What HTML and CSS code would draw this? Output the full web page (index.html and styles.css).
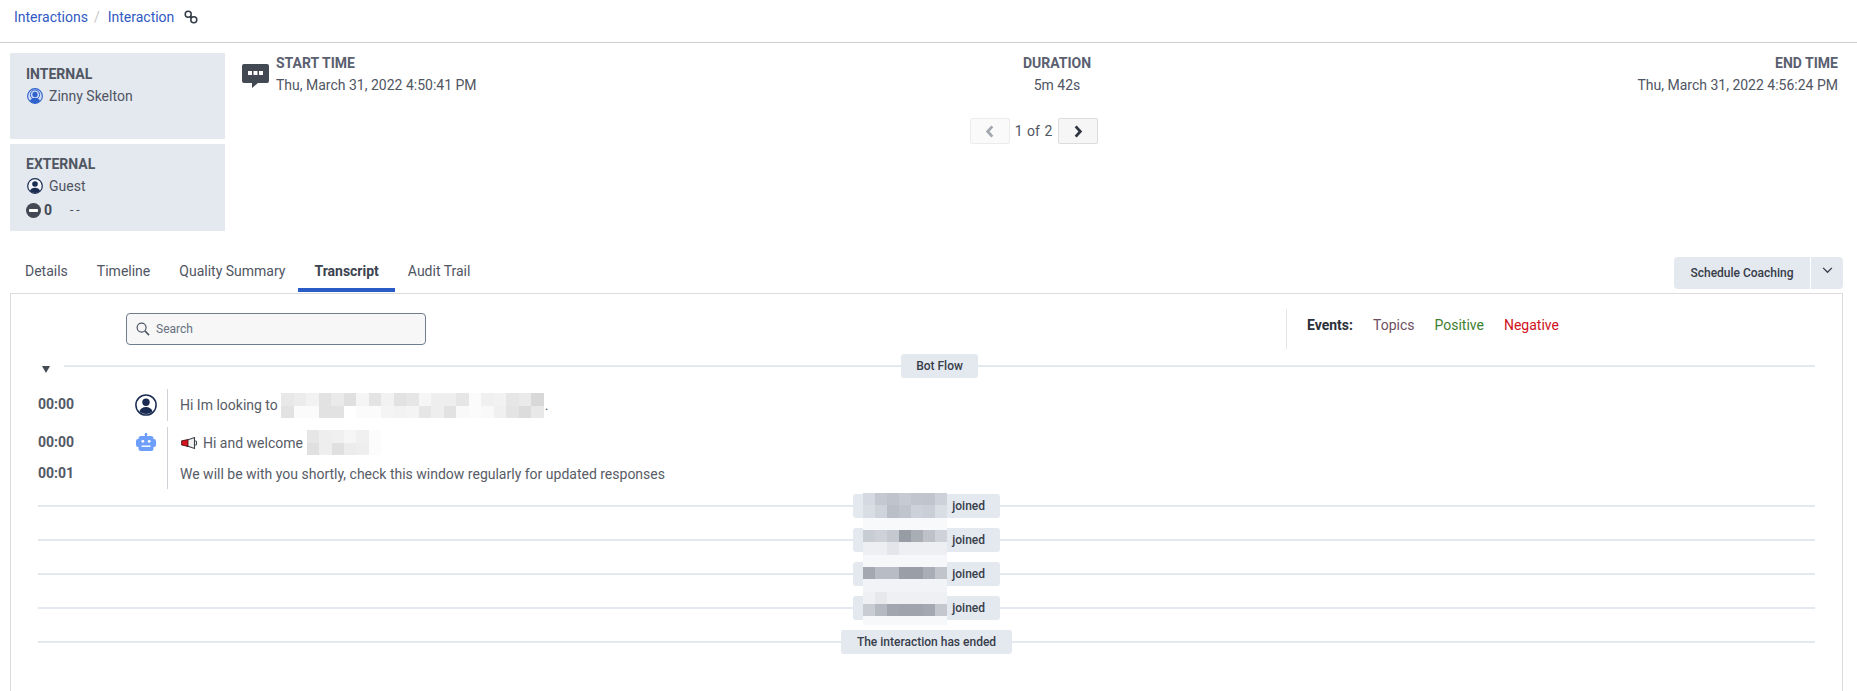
FILE: index.html
```html
<!DOCTYPE html>
<html lang="en">
<head>
<meta charset="utf-8">
<title>Interaction</title>
<link rel="stylesheet" href="styles.css">
</head>
<body>
<header class="crumbs">
  <a class="crumb">Interactions</a><span class="crumb-sep">/</span><a class="crumb">Interaction</a>
  <svg class="link-icon" viewBox="0 0 14 14" fill="none" stroke="#333a45" stroke-width="1.5"><circle cx="4.200" cy="4.200" r="3"/><circle cx="9.800" cy="9.800" r="3"/><path d="M6 6l2 2" stroke-width="1.800"/></svg>
</header>

<section class="summary">
  <div class="parties">
    <div class="party party-internal">
      <div class="party-title">INTERNAL</div>
      <div class="party-line">
        <svg class="party-icon" viewBox="0 0 16 16"><circle cx="8" cy="8" r="7.400" fill="#cfdcf5" stroke="#2f62cc" stroke-width="1.100"/><circle cx="8" cy="6.600" r="4.600" fill="none" stroke="#2f62cc" stroke-width="1"/><circle cx="8" cy="6.400" r="2.600" fill="#2f62cc"/><path d="M3 13.200c.8-2.400 2.700-3.400 5-3.400s4.200 1 5 3.400a7.400 7.400 0 0 1-10 0z" fill="#2f62cc"/></svg>
        <span>Zinny Skelton</span>
      </div>
    </div>
    <div class="party party-external">
      <div class="party-title">EXTERNAL</div>
      <div class="party-line">
        <svg class="party-icon" viewBox="0 0 16 16"><circle cx="8" cy="8" r="7.300" fill="#f4f6fa" stroke="#1a2c52" stroke-width="1.200"/><circle cx="8" cy="6" r="2.800" fill="#1a2c52"/><path d="M3 13c.6-2.300 2.600-3.300 5-3.300s4.400 1 5 3.300a7 7 0 0 1-10 0z" fill="#1a2c52"/></svg>
        <span>Guest</span>
      </div>
      <div class="party-score">
        <svg class="score-icon" viewBox="0 0 15 15"><circle cx="7.500" cy="7.500" r="7.500" fill="#424955"/><rect x="3" y="6" width="9" height="3" rx="0.800" fill="#fff"/></svg>
        <b>0</b><span class="score-dash">- -</span>
      </div>
    </div>
  </div>

  <div class="meta">
    <div class="meta-row">
      <div class="meta-start">
        <svg class="chat-icon" viewBox="0 0 27 24"><path d="M2 0h23a2 2 0 0 1 2 2v15a2 2 0 0 1-2 2H16l-6 5v-5H2a2 2 0 0 1-2-2V2a2 2 0 0 1 2-2z" fill="#434953"/><rect x="6" y="7" width="4" height="4" fill="#fff"/><rect x="11.500" y="7" width="4" height="4" fill="#fff"/><rect x="17" y="7" width="4" height="4" fill="#fff"/></svg>
        <div>
          <div class="meta-label">START TIME</div>
          <div class="meta-value">Thu, March 31, 2022 4:50:41 PM</div>
        </div>
      </div>
      <div class="meta-center">
        <div class="meta-label">DURATION</div>
        <div class="meta-value">5m 42s</div>
      </div>
      <div class="meta-end">
        <div class="meta-label">END TIME</div>
        <div class="meta-value">Thu, March 31, 2022 4:56:24 PM</div>
      </div>
    </div>
    <div class="pager">
      <button class="pager-btn pager-prev"><svg viewBox="0 0 10 14" width="10" height="13" fill="none" stroke="#a3a8b0" stroke-width="3"><path d="M7.500 1.500 2.500 7l5 5.500"/></svg></button>
      <span class="pager-text">1 of 2</span>
      <button class="pager-btn pager-next"><svg viewBox="0 0 10 14" width="10" height="13" fill="none" stroke="#2f3540" stroke-width="3"><path d="M2.500 1.500 7.500 7l-5 5.500"/></svg></button>
    </div>
  </div>
</section>

<nav class="tabbar">
  <div class="tabs">
    <a class="tab">Details</a>
    <a class="tab">Timeline</a>
    <a class="tab">Quality Summary</a>
    <a class="tab tab-active">Transcript</a>
    <a class="tab">Audit Trail</a>
  </div>
  <div class="coach">
    <button class="coach-main">Schedule Coaching</button>
    <button class="coach-more"><svg viewBox="0 0 12 8" width="11" height="7" fill="none" stroke="#39404c" stroke-width="1.500"><path d="M1 1l5 5 5-5"/></svg></button>
  </div>
</nav>

<main class="panel">
  <div class="toolbar">
    <label class="search">
      <svg class="search-icon" viewBox="0 0 15 15" fill="none" stroke="#4d5664" stroke-width="1.300"><circle cx="6" cy="6" r="4.800"/><path d="M9.500 9.500 14 14" stroke-width="1.700"/></svg>
      <span>Search</span>
    </label>
    <div class="events">
      <b class="events-title">Events:</b>
      <span class="ev-topics">Topics</span>
      <span class="ev-positive">Positive</span>
      <span class="ev-negative">Negative</span>
    </div>
  </div>

  <div class="flow-row">
    <span class="caret"></span>
    <span class="rule"></span>
    <span class="pill">Bot Flow</span>
    <span class="rule"></span>
  </div>

  <div class="turn turn-first">
    <div class="turn-times"><div class="line-time">00:00</div></div>
    <div class="turn-avatar">
      <svg class="avatar-user" viewBox="0 0 22 22"><circle cx="11" cy="11" r="10.100" fill="#fff" stroke="#1a2c52" stroke-width="1.500"/><circle cx="11" cy="8.300" r="3.700" fill="#1a2c52"/><path d="M4.500 17.500c.6-3 3.400-4.500 6.500-4.500s5.900 1.500 6.500 4.500a9.500 9.500 0 0 1-13 0z" fill="#1a2c52"/></svg>
    </div>
    <div class="turn-body">
      <div class="line-text">
        <span>Hi Im looking to</span>
        <svg class="mosaic-a" viewBox="0 0 21 2" preserveAspectRatio="none" shape-rendering="crispEdges"><rect x="0" y="0" width="1" height="1" fill="#e8e8e8"/><rect x="1" y="0" width="1" height="1" fill="#ececec"/><rect x="2" y="0" width="1" height="1" fill="#f2f2f2"/><rect x="3" y="0" width="1" height="1" fill="#e2e2e2"/><rect x="4" y="0" width="1" height="1" fill="#eaeaea"/><rect x="5" y="0" width="1" height="1" fill="#e0e0e0"/><rect x="6" y="0" width="1" height="1" fill="#f5f5f5"/><rect x="7" y="0" width="1" height="1" fill="#e4e4e4"/><rect x="8" y="0" width="1" height="1" fill="#f2f2f2"/><rect x="9" y="0" width="1" height="1" fill="#e2e2e2"/><rect x="10" y="0" width="1" height="1" fill="#e6e6e6"/><rect x="11" y="0" width="1" height="1" fill="#f6f6f6"/><rect x="12" y="0" width="1" height="1" fill="#eeeeee"/><rect x="13" y="0" width="1" height="1" fill="#eeeeee"/><rect x="14" y="0" width="1" height="1" fill="#e6e6e6"/><rect x="15" y="0" width="1" height="1" fill="#fbfbfb"/><rect x="16" y="0" width="1" height="1" fill="#f0f0f0"/><rect x="17" y="0" width="1" height="1" fill="#f2f2f2"/><rect x="18" y="0" width="1" height="1" fill="#e6e6e6"/><rect x="19" y="0" width="1" height="1" fill="#eaeaea"/><rect x="20" y="0" width="1" height="1" fill="#d8d8d8"/><rect x="0" y="1" width="1" height="1" fill="#e2e2e2"/><rect x="1" y="1" width="1" height="1" fill="#fbfbfb"/><rect x="2" y="1" width="1" height="1" fill="#fbfbfb"/><rect x="3" y="1" width="1" height="1" fill="#e2e2e2"/><rect x="4" y="1" width="1" height="1" fill="#e2e2e2"/><rect x="5" y="1" width="1" height="1" fill="#ffffff"/><rect x="6" y="1" width="1" height="1" fill="#fbfbfb"/><rect x="7" y="1" width="1" height="1" fill="#fbfbfb"/><rect x="8" y="1" width="1" height="1" fill="#f4f4f4"/><rect x="9" y="1" width="1" height="1" fill="#f2f2f2"/><rect x="10" y="1" width="1" height="1" fill="#f4f4f4"/><rect x="11" y="1" width="1" height="1" fill="#e6e6e6"/><rect x="12" y="1" width="1" height="1" fill="#eeeeee"/><rect x="13" y="1" width="1" height="1" fill="#e2e2e2"/><rect x="14" y="1" width="1" height="1" fill="#f9f9f9"/><rect x="15" y="1" width="1" height="1" fill="#fbfbfb"/><rect x="16" y="1" width="1" height="1" fill="#f9f9f9"/><rect x="17" y="1" width="1" height="1" fill="#f0f0f0"/><rect x="18" y="1" width="1" height="1" fill="#e4e4e4"/><rect x="19" y="1" width="1" height="1" fill="#dcdcdc"/><rect x="20" y="1" width="1" height="1" fill="#e8e8e8"/></svg>
        <span class="tail-dot">.</span>
      </div>
    </div>
  </div>

  <div class="turn turn-second">
    <div class="turn-times"><div class="line-time">00:00</div><div class="line-time">00:01</div></div>
    <div class="turn-avatar turn-avatar-top">
      <svg class="avatar-bot" viewBox="0 0 20 19"><rect x="9" y="0" width="2" height="3" fill="#6e9efb"/><circle cx="10" cy="1.300" r="1.300" fill="#6e9efb"/><path d="M5 3h10a2.500 2.500 0 0 1 2.500 2.500V6H18a2 2 0 0 1 2 2v4a2 2 0 0 1-2 2h-.5v1.500A2.500 2.500 0 0 1 15 18H5a2.500 2.500 0 0 1-2.500-2.500V14H2a2 2 0 0 1-2-2V8a2 2 0 0 1 2-2h.5v-.5A2.500 2.500 0 0 1 5 3z" fill="#6e9efb"/><circle cx="6.800" cy="8.300" r="1.400" fill="#fff"/><circle cx="13.200" cy="8.300" r="1.400" fill="#fff"/><rect x="5.500" y="12.500" width="9" height="1.400" fill="#fff"/></svg>
    </div>
    <div class="turn-body">
      <div class="line-text">
        <svg class="megaphone" viewBox="0 0 17 12"><path d="M5 3.500 13.500 .6v10.800L5 8.500z" fill="#f2f2f2" stroke="#3a3f48" stroke-width="1.100"/><path d="M.6 3.800 7 2.600v6.800l-6.400-1.400z" fill="#d8141e" stroke="#3a1014" stroke-width=".8"/><path d="M14.200 3.800c1.900.3 1.900 4.100 0 4.400" fill="none" stroke="#3a3f48" stroke-width="1.100"/></svg>
        <span>Hi and welcome</span>
        <svg class="mosaic-b" viewBox="0 0 6 2" preserveAspectRatio="none" shape-rendering="crispEdges"><rect x="0" y="0" width="1" height="1" fill="#e6e6e6"/><rect x="1" y="0" width="1" height="1" fill="#eeeeee"/><rect x="2" y="0" width="1" height="1" fill="#f0f0f0"/><rect x="3" y="0" width="1" height="1" fill="#f6f6f6"/><rect x="4" y="0" width="1" height="1" fill="#f0f0f0"/><rect x="5" y="0" width="1" height="1" fill="#fcfcfc"/><rect x="0" y="1" width="1" height="1" fill="#e0e0e0"/><rect x="1" y="1" width="1" height="1" fill="#eeeeee"/><rect x="2" y="1" width="1" height="1" fill="#e0e0e0"/><rect x="3" y="1" width="1" height="1" fill="#ececec"/><rect x="4" y="1" width="1" height="1" fill="#eeeeee"/><rect x="5" y="1" width="1" height="1" fill="#fcfcfc"/></svg>
      </div>
      <div class="line-text">We will be with you shortly, check this window regularly for updated responses</div>
    </div>
  </div>

  <div class="system-list">
    <div class="system-row"><span class="rule"></span><span class="pill pill-joined">joined</span><span class="rule"></span></div>
    <div class="system-row"><span class="rule"></span><span class="pill pill-joined">joined</span><span class="rule"></span></div>
    <div class="system-row"><span class="rule"></span><span class="pill pill-joined">joined</span><span class="rule"></span></div>
    <div class="system-row"><span class="rule"></span><span class="pill pill-joined">joined</span><span class="rule"></span></div>
    <div class="system-row"><span class="rule"></span><span class="pill pill-ended">The interaction has ended</span><span class="rule"></span></div>
    <svg class="mosaic-names" viewBox="0 0 7 10.700" preserveAspectRatio="none" shape-rendering="crispEdges">
      <rect x="0" y="0" width="1" height="1" fill="#d5dae2"/><rect x="1" y="0" width="1" height="1" fill="#c3c8d1"/><rect x="2" y="0" width="1" height="1" fill="#bfc3cc"/><rect x="3" y="0" width="1" height="1" fill="#c6cad3"/><rect x="4" y="0" width="1" height="1" fill="#c0c5ce"/><rect x="5" y="0" width="1" height="1" fill="#bfc4cd"/><rect x="6" y="0" width="1" height="1" fill="#cdd2da"/>
      <rect x="0" y="1" width="1" height="1" fill="#d9dee5"/><rect x="1" y="1" width="1" height="1" fill="#cfd3dc"/><rect x="2" y="1" width="1" height="1" fill="#babec7"/><rect x="3" y="1" width="1" height="1" fill="#bfc4cd"/><rect x="4" y="1" width="1" height="1" fill="#cdd2da"/><rect x="5" y="1" width="1" height="1" fill="#c9ced7"/><rect x="6" y="1" width="1" height="1" fill="#d9dee5"/>
      <rect x="0" y="2" width="7" height="1" fill="#f8f9fb"/>
      <rect x="0" y="3" width="1" height="1" fill="#c8ccd3"/><rect x="1" y="3" width="1" height="1" fill="#ced1d7"/><rect x="2" y="3" width="1" height="1" fill="#c5c8ce"/><rect x="3" y="3" width="1" height="1" fill="#989ca4"/><rect x="4" y="3" width="1" height="1" fill="#a9adb4"/><rect x="5" y="3" width="1" height="1" fill="#bec1c8"/><rect x="6" y="3" width="1" height="1" fill="#cfd2d8"/>
      <rect x="0" y="4" width="7" height="1" fill="#edeff3"/><rect x="2" y="4" width="1" height="1" fill="#e3e5ea"/>
      <rect x="0" y="5" width="7" height="1" fill="#f6f7f9"/>
      <rect x="0" y="6" width="1" height="1" fill="#a4a8b0"/><rect x="1" y="6" width="1" height="1" fill="#b8bcc4"/><rect x="2" y="6" width="1" height="1" fill="#b8bcc4"/><rect x="3" y="6" width="1" height="1" fill="#9a9ea6"/><rect x="4" y="6" width="1" height="1" fill="#9a9ea6"/><rect x="5" y="6" width="1" height="1" fill="#a9adb5"/><rect x="6" y="6" width="1" height="1" fill="#c1c5cb"/>
      <rect x="0" y="7" width="7" height="1" fill="#f1f3f6"/>
      <rect x="0" y="8" width="7" height="1" fill="#eef0f4"/><rect x="1" y="8" width="1" height="1" fill="#e6e8ec"/>
      <rect x="0" y="9" width="1" height="1" fill="#c9ccd3"/><rect x="1" y="9" width="1" height="1" fill="#b5b9c1"/><rect x="2" y="9" width="1" height="1" fill="#a2a6ae"/><rect x="3" y="9" width="1" height="1" fill="#a0a4ac"/><rect x="4" y="9" width="1" height="1" fill="#a0a4ac"/><rect x="5" y="9" width="1" height="1" fill="#a4a8b0"/><rect x="6" y="9" width="1" height="1" fill="#c4c8ce"/>
      <rect x="0" y="10" width="7" height="1" fill="#f7f8fa"/>
    </svg>
  </div>
</main>
</body>
</html>
```

FILE: styles.css
```css
* { box-sizing: border-box; }

html, body { height: 691px; overflow: hidden; }

body {
  margin: 0;
  background: #fff;
  color: #4f5562;
  font-family: Roboto, "Liberation Sans", sans-serif;
  font-size: 14px;
  line-height: 20px;
}

/* Breadcrumbs */
.crumbs {
  display: flex;
  align-items: center;
  height: 43px;
  padding: 0 0 9px 14px;
  border-bottom: 1px solid #cfcfcf;
}
.crumb { color: #3159c4; }
.crumb-sep { color: #c8c8c8; margin: 0 8px 0 6px; }
.link-icon { width: 14px; height: 14px; margin-left: 10px; }

/* Summary */
.summary { display: flex; padding: 10px 15px 0 10px; }

.parties { display: flex; flex-direction: column; gap: 5px; width: 215px; flex: none; }
.party { background: #e4e8ef; padding: 11px 16px 0; }
.party-internal { height: 86px; }
.party-external { height: 87px; padding-top: 10px; }
.party-title { font-weight: 700; color: #505662; font-size: 14px; }
.party-line { display: flex; align-items: center; gap: 6px; margin-top: 2px; }
.party-icon { width: 16px; height: 16px; flex: none; margin-left: 1px; }
.party-score { display: flex; align-items: center; margin-top: 4px; font-size: 14px; }
.party-score b { color: #424955; margin-left: 3px; }
.score-icon { width: 15px; height: 15px; flex: none; }
.score-dash { margin-left: 18px; color: #424955; font-size: 12px; }

.meta { flex: 1; min-width: 0; }
.meta-row { display: flex; justify-content: space-between; padding: 0 4px 0 17px; }
.meta-start { display: flex; gap: 7px; }
.chat-icon { width: 27px; height: 24px; margin-top: 11px; flex: none; }
.meta-label { font-weight: 700; font-size: 14px; color: #5a6070; }
.meta-value { margin-top: 2px; color: #4f5562; }
.meta-center { text-align: center; }
.meta-end { text-align: right; }

.pager { display: flex; justify-content: center; align-items: center; margin-top: 23px; }
.pager-btn {
  display: flex;
  align-items: center;
  justify-content: center;
  width: 40px;
  height: 26px;
  padding: 0;
  border-radius: 2px;
}
.pager-prev { background: #fafafa; border: 1px solid #ececec; }
.pager-next { background: #f6f6f6; border: 1px solid #dcdcdc; }
.pager-text { width: 48px; text-align: center; word-spacing: 1px; }

/* Tabs */
.tabbar {
  display: flex;
  justify-content: space-between;
  align-items: flex-start;
  margin: 26px 14px 0 10px;
  height: 36px;
}
.tabs { display: flex; }
.tab {
  padding: 4px 14.500px 7px;
  border-bottom: 4px solid transparent;
  color: #4f5562;
}
.tab:first-child { padding-left: 15px; }
.tab-active {
  padding: 4px 16px 7px;
  margin-left: -1.500px;
  margin-right: -1.500px;
  font-weight: 700;
  color: #3c4350;
  border-bottom-color: #2a5cc8;
}
.coach { display: flex; gap: 1px; height: 32px; }
.coach button { background: #e4e8ef; border: 0; padding: 0; }
.coach-main {
  width: 136px;
  border-radius: 4px 0 0 4px;
  font: 500 12px Roboto, sans-serif;
  color: #363c48;
}
.coach-more { width: 32px; border-radius: 0 4px 4px 0; padding-bottom: 8px !important; }

/* Panel */
.panel {
  margin: 0 14px 0 10px;
  height: 398px;
  border: 1px solid #dcdcdc;
  border-bottom: 0;
}
.toolbar { display: flex; padding: 15px 0 0 115px; height: 60px; }
.search {
  display: flex;
  align-items: center;
  gap: 6px;
  width: 300px;
  height: 32px;
  margin-top: 4px;
  padding-left: 9px;
  background: #f7f7f7;
  border: 1px solid #6f7d90;
  border-radius: 4px;
  font-size: 12px;
  color: #667080;
}
.search-icon { width: 14px; height: 14px; }
.events {
  display: flex;
  gap: 20px;
  height: 40px;
  margin-left: 860px;
  padding: 6px 0 0 20px;
  border-left: 1px solid #e6e6e6;
  font-size: 14px;
}
.events-title { color: #2b303a; font-weight: 700; }
.ev-topics { color: #6e4f5e; }
.ev-positive { color: #3d8030; }
.ev-negative { color: #cf1020; }

.flow-row { display: flex; align-items: center; height: 24px; padding: 0 27px 0 31px; }
.caret {
  width: 0;
  height: 0;
  margin: 6px 14px 0 0;
  border-left: 4px solid transparent;
  border-right: 4px solid transparent;
  border-top: 7px solid #444a54;
}
.rule { flex: 1; height: 2px; background: #e4e8ef; }
.pill {
  display: flex;
  align-items: center;
  justify-content: center;
  height: 24px;
  background: #e4e8ef;
  border-radius: 3px;
  font-size: 12px;
  font-weight: 500;
  color: #383e4a;
}
.flow-row .pill { width: 77px; }
.pill-ended { width: 171px; }
.pill-joined { justify-content: flex-end; width: 147px; padding-right: 15px; }

.turn { display: grid; grid-template-columns: 98px 31px 1fr; padding-left: 27px; }
.turn-first { margin-top: 11px; height: 32px; }
.turn-second { margin-top: 6px; height: 62px; }
.line-time { height: 31px; line-height: 31px; font-weight: 700; font-size: 14px; color: #535964; }
.turn-first .line-time { height: 32px; }
.turn-avatar { display: flex; justify-content: center; padding-right: 11px; align-items: center; }
.turn-avatar-top { align-items: flex-start; padding-top: 6px; }
.avatar-user { width: 22px; height: 22px; flex: none; }
.avatar-bot { width: 20px; height: 19px; flex: none; }
.turn-body { border-left: 1px solid #cfd2d6; padding-left: 12px; }
.line-text {
  display: flex;
  align-items: center;
  height: 31px;
  color: #575c66;
  white-space: pre;
}
.turn-first .line-text { height: 32px; }
.mosaic-a { width: 263px; height: 25px; margin-left: 3px; }
.tail-dot { margin-left: 1px; }
.megaphone { width: 17px; height: 12px; margin: 0 5px 0 1px; }
.mosaic-b { width: 74px; height: 25px; margin-left: 4px; }

.system-list {
  position: relative;
  display: flex;
  flex-direction: column;
  gap: 10px;
  margin: 5px 27px 0;
}
.system-row { display: flex; align-items: center; }
.mosaic-names {
  position: absolute;
  top: -1px;
  left: 825px;
  width: 84px;
  height: 132px;
}
```
